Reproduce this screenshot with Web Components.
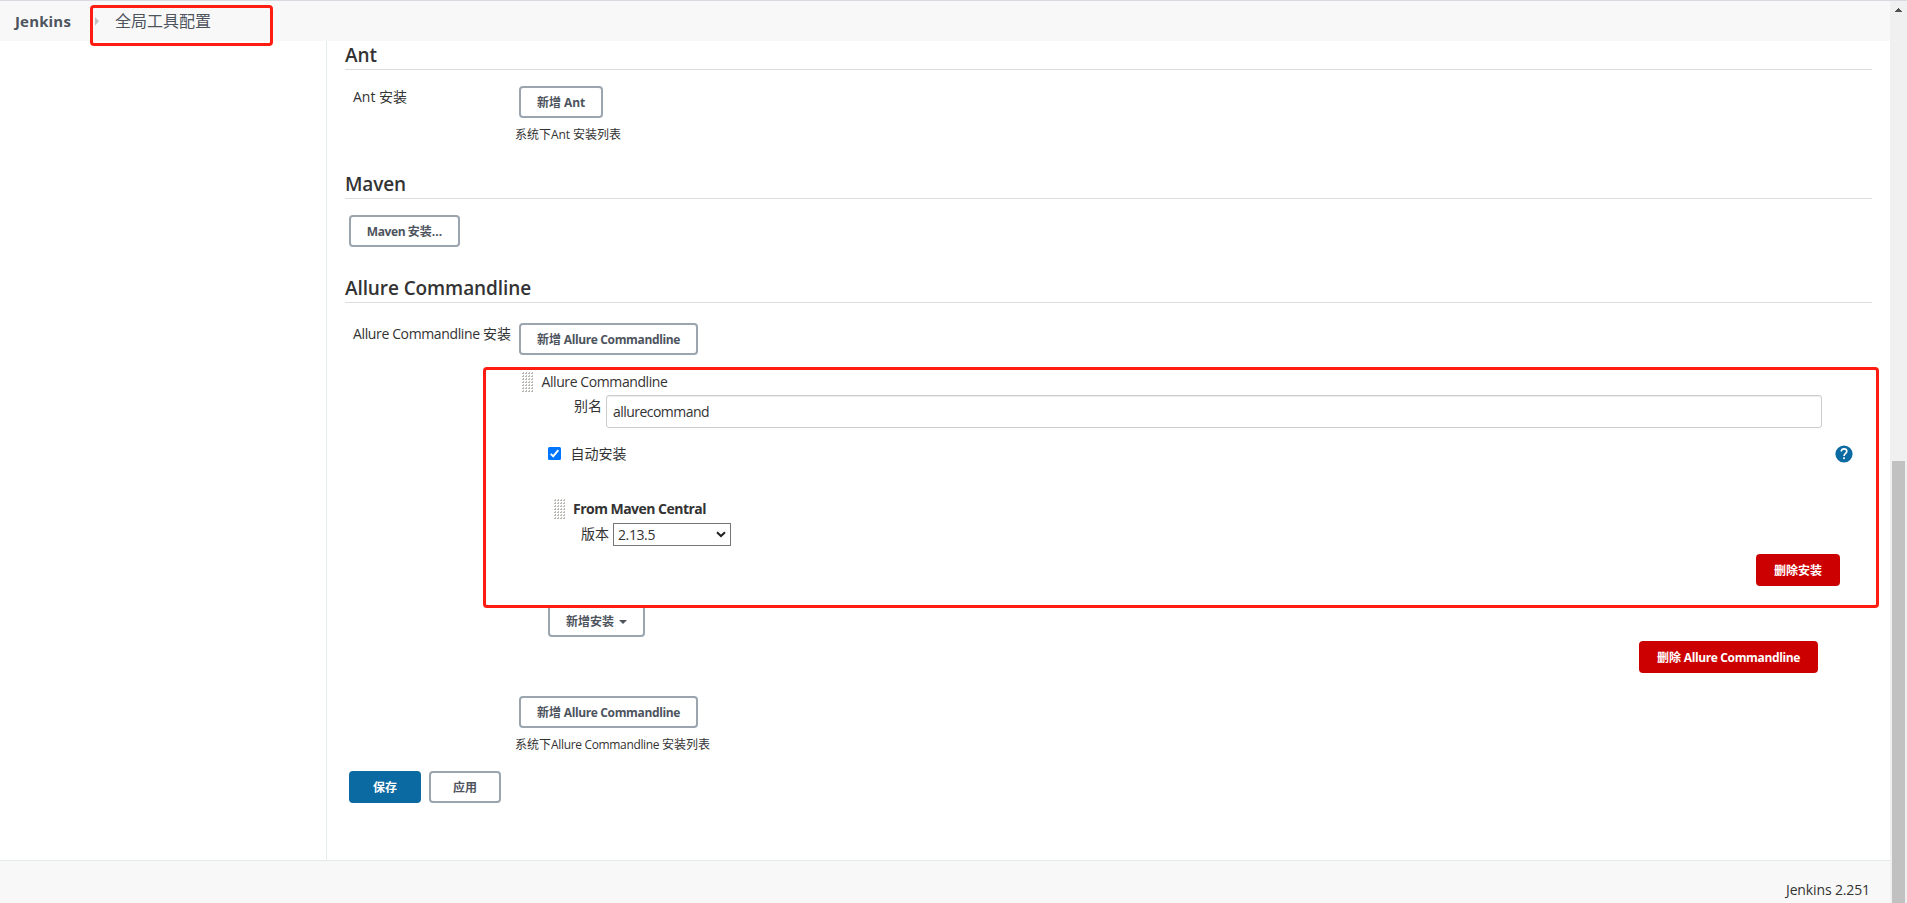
<!DOCTYPE html>
<html lang="zh">
<head>
<meta charset="utf-8">
<title>全局工具配置 [Jenkins]</title>
<style>
html,body{margin:0;height:100%;overflow:hidden;background:#fff}
body{font-family:"Open Sans","Noto Sans CJK SC",sans-serif;font-size:14px;line-height:20px;color:#333}
</style>
</head>
<body>
<jenkins-app></jenkins-app>
<script>
const define = (name, html, setup) => {
  const t = document.createElement('template');
  t.innerHTML = html;
  customElements.define(name, class extends HTMLElement {
    connectedCallback() {
      if (this.shadowRoot) return;
      this.attachShadow({mode: 'open'}).append(t.content.cloneNode(true));
      if (setup) setup.call(this, this.shadowRoot);
    }
  });
};

/* Latin run tracked to a given advance width */
define('latin-run', `<style>:host{display:inline-block;white-space:pre;line-height:inherit}</style><slot></slot>`,
  function () {
    const want = parseFloat(this.getAttribute('w'));
    const natural = this.getBoundingClientRect().width;
    if (want && natural) this.style.letterSpacing = ((want - natural) / this.textContent.length).toFixed(4) + 'px';
  });

define('j-button', `<style>
:host{display:flex;box-sizing:border-box;height:32px;flex:none;align-items:center;justify-content:center;white-space:pre;
 border:2px solid #9aa5af;border-radius:4px;background:#fff;color:#4d545d;font-size:12px;font-weight:700;line-height:26px;padding-top:2px}
:host([kind=primary]){background:#0b6aa2;border-color:#0b6aa2;color:#fff}
:host([kind=danger]){background:#c00;border-color:#c00;color:#fff}
i{display:none;width:0;border:4px solid transparent;border-top-color:#4d545d;border-bottom:0;margin-left:5px}
:host([menu]) i{display:block}
</style><slot></slot><i></i>`);

define('drag-grip', `<style>:host{display:block;width:11px;height:20px;flex:none;white-space:normal}svg{display:block}</style>
<svg width="11" height="20" shape-rendering="crispEdges"><defs><pattern id="p" width="3" height="3" patternUnits="userSpaceOnUse"><path d="M0 1h1v-1h1v2h-2z" fill="#b9b9b4"/></pattern></defs><rect width="11" height="20" fill="url(#p)"/></svg>`);

define('section-title', `<style>:host{display:block;box-sizing:border-box;width:1527px;height:30px;border-bottom:1px solid #dcdcde;
font-size:19px;font-weight:600;line-height:31px;white-space:pre}</style><slot></slot>`);

define('form-row', `<style>
:host{display:flex;align-items:flex-start;padding-left:8px}
.l{width:166px;flex:none;white-space:pre}
.c{display:flex;flex-direction:column;align-items:flex-start}
</style><div class="l"><slot name="label"></slot></div><div class="c"><slot></slot></div>`);

define('help-text', `<style>:host{display:block;font-size:12px;line-height:18px;margin:8px 0 0 -4px;white-space:pre}</style><slot></slot>`);

define('text-field', `<style>
:host{display:flex;box-sizing:border-box;width:1216px;height:33px;border:1px solid #ccc;border-radius:3px;padding-left:6px;
box-shadow:inset 0 1px 1px rgba(0,0,0,.075);line-height:32px}</style><slot></slot>`);

define('check-box', `<style>:host{display:block;width:13px;height:13px;flex:none;white-space:normal}svg{display:block}</style>
<svg width="13" height="13"><rect width="13" height="13" rx="1.5" fill="#0075ff"/><path d="M2.7 6.9 5.2 9.3 10.3 3.2" fill="none" stroke="#fff" stroke-width="2"/></svg>`);

define('help-icon', `<style>:host{display:block;width:18px;height:18px;white-space:normal}svg{display:block}</style>
<svg width="18" height="18" viewBox="0 0 18 18"><circle cx="9" cy="9" r="8.6" fill="#0b6aa2"/><path d="M6.3 6.6C6.3 5 7.4 3.9 9 3.9s2.8 1 2.8 2.5c0 1.9-2.7 2.1-2.7 4.5" fill="none" stroke="#fff" stroke-width="1.6"/><rect x="8.2" y="12.3" width="1.7" height="1.8" fill="#fff"/></svg>`);

define('version-select', `<style>:host{display:flex;box-sizing:border-box;width:118px;height:23px;border:1px solid #767676;justify-content:space-between;align-items:center;padding:0 4px;line-height:22px;white-space:normal}</style>
<slot></slot><svg width="10" height="7"><path d="M1 1.2 5 5 9 1.2" fill="none" stroke="#222" stroke-width="2"/></svg>`);

define('crumb-bar', `<style>
:host{display:flex;box-sizing:border-box;height:41px;border-top:1px solid #d9d9df;background:#f8f8f8;padding-left:15px;color:#4d545d;line-height:41px}
b{width:80px;font-weight:700;font-size:15px}
svg{width:20px;height:9px;margin-top:16px;flex:none}
span{font-size:16px;line-height:40px}
</style><b><latin-run w="56">Jenkins</latin-run></b><svg viewBox="0 0 20 9"><path d="M0 0 4 4.2 0 8.4z" fill="#c2c2c2"/></svg><span>全局工具配置</span>`);

define('scroll-bar', `<style>:host{display:flex;flex-direction:column;align-items:center;box-sizing:border-box;width:17px;height:903px;background:#f0f0f0;border-top:1px solid #d9d9df;flex:none}
svg{margin-top:7px;height:4px;width:7px}i{width:13px;height:442px;margin-top:449px;background:#c1c1c1}</style>
<svg shape-rendering="crispEdges"><path d="M3 0h1v1h1v1h1v1h1v1h-7v-1h1v-1h1v-1h1z" fill="#505050"/></svg><i></i>`);

define('mark-box', `<style>:host{display:block;position:absolute;box-sizing:border-box;border:3px solid #ff1c10;border-radius:4px;pointer-events:none}</style>`);

define('tool-item', `<style>
:host{display:block;width:1360px}
div{display:flex;align-items:flex-start;white-space:pre}
.name{margin:17px 0 0 3px;height:23px}.name latin-run{margin-left:8.5px}
.alias{height:33px}.alias span{margin:1px 4px 0 55px;line-height:20px}.alias{margin-top:0}
.auto{margin:19px 0 0 29px;height:20px}.auto span{margin:-3px 0 0 9.5px}.auto help-icon{margin-left:auto;margin-right:26px;margin-top:-2px}
.from{margin:32px 0 0 35px;height:24px;font-weight:700}.from latin-run{margin-left:8px}
.ver{margin-left:62px}.ver span{margin-right:4px;line-height:22px}
.del{justify-content:flex-end;margin:8px 39px 0 0}
.add{margin:19px 0 0 29px}
.rem{justify-content:flex-end;margin:4px 61px 0 0}
</style>
<div class="name"><drag-grip></drag-grip><latin-run w="126">Allure Commandline</latin-run></div>
<div class="alias"><span>别名</span><text-field><latin-run w="96">allurecommand</latin-run></text-field></div>
<div class="auto"><check-box></check-box><span>自动安装</span><help-icon></help-icon></div>
<div class="from"><drag-grip></drag-grip><latin-run w="133">From Maven Central</latin-run></div>
<div class="ver"><span>版本</span><version-select><latin-run w="37">2.13.5</latin-run></version-select></div>
<div class="del"><j-button kind="danger" style="width:84px">删除安装</j-button></div>
<div class="add"><j-button menu style="width:97px">新增安装</j-button></div>
<div class="rem"><j-button kind="danger" style="width:179px">删除<latin-run w="119"> Allure Commandline</latin-run></j-button></div>`);

define('jenkins-app', `<style>
:host{display:flex;position:relative;width:1907px;height:903px;overflow:hidden}
.page{display:flex;flex-direction:column;width:1890px}
.body{display:flex;height:819px}
aside{width:326px;border-right:1px solid #e6eded;flex:none}
main{padding-left:18px}
section-title{margin-top:-1px}
.bar{display:flex;gap:8px;margin:13px 0 0 4px}
footer{flex:1;box-sizing:border-box;border-top:1px solid #e3e9e9;background:#f8f8f8;display:flex;justify-content:flex-end;padding:18px 20px 0 0;line-height:22px}
.lab{display:block}
</style>
<div class="page">
<crumb-bar></crumb-bar>
<div class="body"><aside></aside>
<main>
<section-title><latin-run w="32">Ant</latin-run></section-title>
<form-row style="margin-top:16px;height:83px"><span class="lab" slot="label" style="padding-top:1px"><latin-run w="26">Ant </latin-run>安装</span>
<j-button style="width:84px">新增<latin-run w="24"> Ant</latin-run></j-button><help-text>系统下<latin-run w="22">Ant </latin-run>安装列表</help-text></form-row>
<section-title style="margin-top:0"><latin-run w="61">Maven</latin-run></section-title>
<div class="bar" style="margin-top:16px"><j-button style="width:111px"><latin-run w="41">Maven </latin-run>安装...</j-button></div>
<section-title style="margin-top:26px"><latin-run w="186">Allure Commandline</latin-run></section-title>
<form-row style="margin-top:20px;height:448px"><span class="lab" slot="label" style="padding-top:1px"><latin-run w="130">Allure Commandline </latin-run>安装</span>
<j-button style="width:179px">新增<latin-run w="119"> Allure Commandline</latin-run></j-button>
<tool-item></tool-item>
<j-button style="width:179px;margin-top:23px">新增<latin-run w="119"> Allure Commandline</latin-run></j-button>
<help-text>系统下<latin-run w="111">Allure Commandline </latin-run>安装列表</help-text></form-row>
<div class="bar" style="margin-top:0"><j-button kind="primary" style="width:72px">保存</j-button><j-button style="width:72px">应用</j-button></div>
</main></div>
<footer><latin-run w="84">Jenkins 2.251</latin-run></footer>
</div>
<scroll-bar></scroll-bar>
<mark-box style="left:90px;top:5px;width:183px;height:41px"></mark-box>
<mark-box style="left:483px;top:367px;width:1396px;height:241px"></mark-box>`);
</script>
</body>
</html>
